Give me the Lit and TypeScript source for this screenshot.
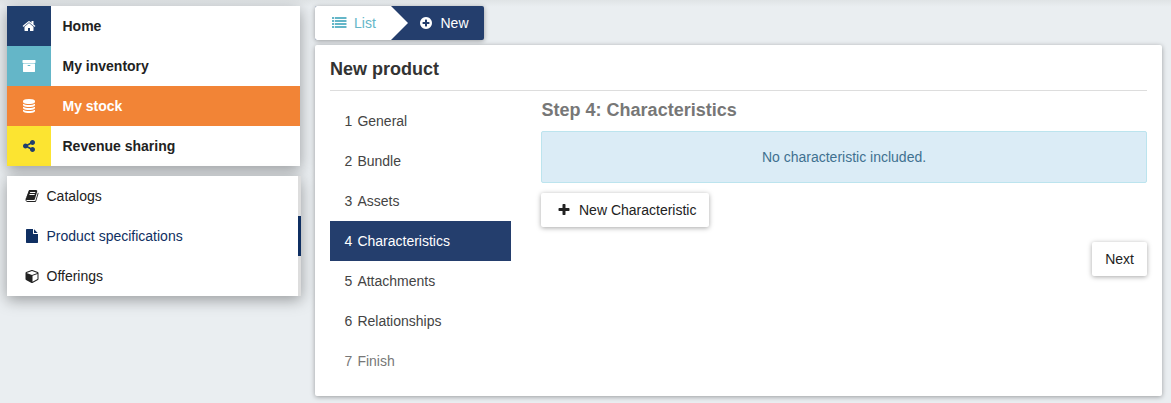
import { LitElement, html, css, svg } from "lit";
import { customElement, property } from "lit/decorators.js";
import { classMap } from "lit/directives/class-map.js";

const row = (y: number) => `M32 ${y}h224q32 0 32 32v192q0 32-32 32h-224q-32 0-32-32v-192q0-32 32-32zM416 ${y}h1408q32 0 32 32v192q0 32-32 32h-1408q-32 0-32-32v-192q0-32 32-32z`;

const ICONS: Record<string, string> = {
  home: "M1472 992v480q0 26-19 45t-45 19h-384v-384h-256v384h-384q-26 0-45-19t-19-45v-480q0-1 .5-3t.5-3l575-474 575 474q1 2 1 6zm223-69l-62 74q-8 9-21 11h-3q-13 0-21-7l-692-577-692 577q-12 8-24 7-13-2-21-11l-62-74q-8-10-7-23.5t11-21.5l719-599q32-26 76-26t76 26l244 204v-195q0-14 9-23t23-9h192q14 0 23 9t9 23v408l219 182q10 8 11 21.5t-7 23.5z",
  archive: "M1088 832q0-26-19-45t-45-19h-256q-26 0-45 19t-19 45 19 45 45 19h256q26 0 45-19t19-45zm576-192v960q0 26-19 45t-45 19h-1408q-26 0-45-19t-19-45v-960q0-26 19-45t45-19h1408q26 0 45 19t19 45zm64-448v256q0 26-19 45t-45 19h-1536q-26 0-45-19t-19-45v-256q0-26 19-45t45-19h1536q26 0 45 19t19 45z",
  database: "M896 768q237 0 443-43t325-127v170q0 69-103 128t-280 93.5-385 34.5-385-34.5-280-93.5-103-128v-170q119 84 325 127t443 43zm0 768q237 0 443-43t325-127v170q0 69-103 128t-280 93.5-385 34.5-385-34.5-280-93.5-103-128v-170q119 84 325 127t443 43zm0-384q237 0 443-43t325-127v170q0 69-103 128t-280 93.5-385 34.5-385-34.5-280-93.5-103-128v-170q119 84 325 127t443 43zm0-1152q208 0 385 34.5t280 93.5 103 128v128q0 69-103 128t-280 93.5-385 34.5-385-34.5-280-93.5-103-128v-128q0-69 103-128t280-93.5 385-34.5z",
  share: "M1344 1024q133 0 226.5 93.5t93.5 226.5-93.5 226.5-226.5 93.5-226.5-93.5-93.5-226.5q0-12 2-34l-360-180q-92 86-218 86-133 0-226.5-93.5t-93.5-226.5 93.5-226.5 226.5-93.5q126 0 218 86l360-180q-2-22-2-34 0-133 93.5-226.5t226.5-93.5 226.5 93.5 93.5 226.5-93.5 226.5-226.5 93.5q-126 0-218-86l-360 180q2 22 2 34t-2 34l360 180q92-86 218-86z",
  book: "M1703 478q40 57 18 129l-275 906q-19 64-76.5 107.5t-122.5 43.5h-923q-77 0-148.5-53.5t-99.5-131.5q-24-67-2-127 0-4 3-27t4-37q1-8-3-21.5t-3-19.5q2-11 8-21t16.5-23.5 16.5-23.5q23-38 45-91.5t30-91.5q3-10 .5-30t-.5-28q3-11 17-28t17-23q21-36 42-92t25-90q1-9-2.5-32t.5-28q4-13 22-30.5t22-22.5q19-26 42.5-84.5t27.5-96.5q1-8-3-25.5t-2-26.5q2-8 9-18t18-23 17-21q8-12 16.5-30.5t15-35 16-36 19.5-32 26.5-23.5 36-11.5 47.5 5.5l-1 3q38-9 51-9h761q74 0 114 56t18 130l-274 906q-36 119-71.5 153.5t-128.5 34.5h-869q-27 0-38 15-11 16-1 43 24 70 144 70h923q29 0 56-15.5t35-41.5l300-987q7-22 5-57 38 15 59 43zm-1064 2q-4 13 2 22.5t20 9.5h608q13 0 25.5-9.5t16.5-22.5l21-64q4-13-2-22.5t-20-9.5h-608q-13 0-25.5 9.5t-16.5 22.5zm-83 256q-4 13 2 22.5t20 9.5h608q13 0 25.5-9.5t16.5-22.5l21-64q4-13-2-22.5t-20-9.5h-608q-13 0-25.5 9.5t-16.5 22.5z",
  file: "M1152 512v-472q22 14 36 28l408 408q14 14 28 36h-472zm-128 32q0 40 28 68t68 28h544v1056q0 40-28 68t-68 28h-1344q-40 0-68-28t-28-68v-1600q0-40 28-68t68-28h800v544z",
  cube: "M960 1629l640-349v-636l-640 233v752zm-64-865l698-254-698-254-698 254zm832-252v768q0 35-18 65t-49 47l-704 384q-28 16-61 16t-61-16l-704-384q-31-17-49-47t-18-65v-768q0-40 23-73t61-47l704-256q22-8 44-8t44 8l704 256q38 14 61 47t23 73z",
  plus: "M1600 736v192q0 40-28 68t-68 28h-416v416q0 40-28 68t-68 28h-192q-40 0-68-28t-28-68v-416h-416q-40 0-68-28t-28-68v-192q0-40 28-68t68-28h416v-416q0-40 28-68t68-28h192q40 0 68 28t28 68v416h416q40 0 68 28t28 68z",
  plusCircle: "M1344 960v-128q0-26-19-45t-45-19h-256v-256q0-26-19-45t-45-19h-128q-26 0-45 19t-19 45v256h-256q-26 0-45 19t-19 45v128q0 26 19 45t45 19h256v256q0 26 19 45t45 19h128q26 0 45-19t19-45v-256h256q26 0 45-19t19-45zm320-64q0 209-103 385.5t-279.5 279.5-385.5 103-385.5-103-279.5-279.5-103-385.5 103-385.5 279.5-279.5 385.5-103 385.5 103 279.5 279.5 103 385.5z",
  list: [128, 512, 896, 1280].map(row).join(""),
};

@customElement("fa-icon")
class FaIcon extends LitElement {
  @property() name = "home";
  static styles = css`
    :host { display: block; width: 14px; height: 14px; flex: none; }
    .glyph { display: block; width: 100%; height: 100%; fill: currentColor; overflow: visible; }
  `;
  render() {
    return html`<svg class="glyph" viewBox="0 0 1792 1792">${svg`<path d=${ICONS[this.name]}></path>`}</svg>`;
  }
}

const MAIN = [
  { label: "Home", icon: "home", tone: "navy" },
  { label: "My inventory", icon: "archive", tone: "teal" },
  { label: "My stock", icon: "database", tone: "orange" },
  { label: "Revenue sharing", icon: "share", tone: "yellow" },
];
const SUB = [
  { label: "Catalogs", icon: "book" },
  { label: "Product specifications", icon: "file", active: true },
  { label: "Offerings", icon: "cube" },
];
const STEPS = ["General", "Bundle", "Assets", "Characteristics", "Attachments", "Relationships", "Finish"];

@customElement("app-root")
class AppRoot extends LitElement {
  static styles = css`
    :host {
      display: block; height: 403px; overflow: hidden; box-sizing: border-box;
      font: 14px/20px "Liberation Sans", Arial, sans-serif; color: #222;
      background: linear-gradient(#e0e4e6, #eaeef1 7px);
    }
    * { box-sizing: border-box; }
    .page { display: flex; gap: 14px; padding: 6px 9px 0 7px; height: 100%; }
    .side { width: 294px; display: flex; flex-direction: column; gap: 10px; flex: none; }
    .menu { width: 293px; background: #fff; box-shadow: 0 4px 14px rgba(0,0,0,.35); }
    .item { display: flex; height: 40px; align-items: center; font-weight: bold; }
    .tile { width: 44px; height: 40px; display: flex; align-items: center; justify-content: center; color: #fff; margin-right: 11.5px; }
    .navy .tile { background: #203e6d; }
    .teal .tile { background: #64b6c8; }
    .orange { background: #f28436; color: #fff; }
    .yellow .tile { background: #fce431; color: #203e6d; }
    .sub { width: 294px; background: #fff; box-shadow: 0 4px 14px rgba(0,0,0,.35); }
    .link { display: flex; align-items: center; height: 40px; padding-left: 17.5px; gap: 8px; border-right: 3px solid #ddd; }
    .link.active { color: #0f2f62; border-right-color: #0f2f62; }
    .main { flex: 1; display: flex; flex-direction: column; gap: 5px; min-width: 0; }
    .crumbs { display: flex; width: 169px; height: 34px; border-radius: 2px; background: #243e6d; box-shadow: 0 1px 5px rgba(0,0,0,.35); overflow: hidden; }
    .crumb { display: flex; align-items: center; gap: 8px; }
    .first { width: 93px; padding-left: 17px; background: #fff; color: #64b6c8; clip-path: polygon(0 0, 76px 0, 93px 50%, 76px 100%, 0 100%); }
    .second { padding-left: 11px; gap: 7.5px; color: #fff; }
    .panel { height: 351px; background: #fff; border-radius: 2px; padding: 0 15px; box-shadow: 0 1px 5px rgba(0,0,0,.35); }
    .title { margin: 0; height: 46px; padding-top: 14px; font-size: 18px; line-height: 20px; color: #333; border-bottom: 1px solid #ddd; }
    .body { display: flex; gap: 30px; }
    .steps { width: 181px; padding-top: 10px; flex: none; }
    .step { height: 40px; padding-left: 14.6px; display: flex; align-items: center; gap: 5px; color: #444; }
    .step.current { background: #243e6d; color: #fff; }
    .step.off { color: #777; }
    .content { flex: 1; display: flex; flex-direction: column; align-items: flex-start; }
    .heading { margin: 9px 0 11px; padding-left: .6px; font-size: 18px; line-height: 20px; color: #777; }
    .alert { width: 100%; height: 52px; display: flex; align-items: center; justify-content: center; background: #dbecf6; border: 1px solid #bce4ee; border-radius: 2px; color: #3f7190; }
    .btn { font: inherit; color: #222; height: 34px; border: 0; border-radius: 2px; background: #fff; padding: 0 13px; box-shadow: 0 1px 5px rgba(0,0,0,.35); display: flex; align-items: center; gap: 8px; }
    .add { margin-top: 10px; padding-left: 16px; }
    .next { margin-top: 15px; align-self: flex-end; }
  `;
  render() {
    return html`<div class="page">
      <aside class="side">
        <nav class="menu">${MAIN.map((m) => html`<div class="item ${m.tone}"><span class="tile"><fa-icon name=${m.icon}></fa-icon></span>${m.label}</div>`)}</nav>
        <nav class="sub">${SUB.map((s) => html`<div class=${classMap({ link: true, active: !!s.active })}><fa-icon name=${s.icon}></fa-icon>${s.label}</div>`)}</nav>
      </aside>
      <main class="main">
        <nav class="crumbs">
          <span class="crumb first"><fa-icon name="list"></fa-icon>List</span>
          <span class="crumb second"><fa-icon name="plusCircle"></fa-icon>New</span>
        </nav>
        <section class="panel">
          <h2 class="title">New product</h2>
          <div class="body">
            <div class="steps">${STEPS.map((s, i) => html`<div class=${classMap({ step: true, current: i === 3, off: i === 6 })}><span>${i + 1}</span><span>${s}</span></div>`)}</div>
            <div class="content">
              <h3 class="heading">Step 4: Characteristics</h3>
              <div class="alert">No characteristic included.</div>
              <button class="btn add"><fa-icon name="plus"></fa-icon>New Characteristic</button>
              <button class="btn next">Next</button>
            </div>
          </div>
        </section>
      </main>
    </div>`;
  }
}
